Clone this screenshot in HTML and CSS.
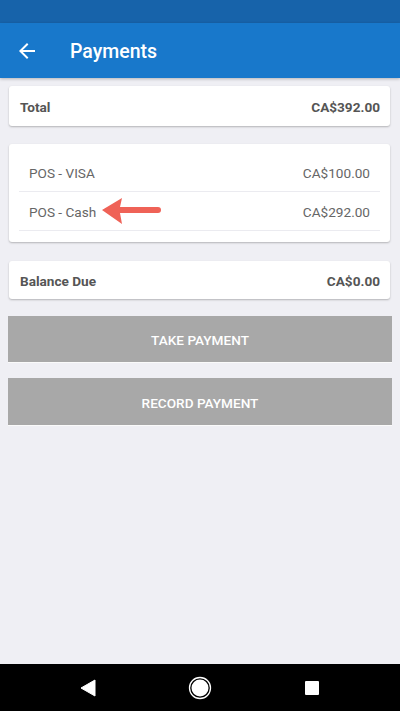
FILE: index.html
```html
<!DOCTYPE html>
<html>
<head>
<meta charset="utf-8">
<link rel="stylesheet" href="styles.css">
</head>
<body>
<div class="screen">
  <div class="status"></div>
  <div class="toolbar">
    <svg class="back" width="24" height="24" viewBox="0 0 24 24"><path d="M20 11H7.83l5.59-5.59L12 4l-8 8 8 8 1.41-1.41L7.83 13H20v-2z" fill="#fff"/></svg>
    <div class="title">Payments</div>
  </div>
  <div class="content">
    <div class="card summary">
      <span>Total</span><span>CA$392.00</span>
    </div>
    <div class="card list">
      <div class="row"><span>POS - VISA</span><span>CA$100.00</span></div>
      <div class="row cash"><span>POS - Cash</span><span>CA$292.00</span>
        <svg class="pointer" width="60" height="28" viewBox="0 0 60 28"><path d="M0 13 L20 1 L18 10 L56 10 A3 3 0 0 1 56 16 L18 16 L20 27 Z" fill="#ef6257"/></svg>
      </div>
    </div>
    <div class="card summary balance">
      <span>Balance Due</span><span>CA$0.00</span>
    </div>
    <div class="btn take">TAKE PAYMENT</div>
    <div class="btn record">RECORD PAYMENT</div>
  </div>
  <div class="navbar">
    <svg width="16" height="18" viewBox="0 0 16 18"><path d="M15 1 L15 17 L1 9 Z" fill="#fff" stroke="#fff" stroke-width="1" stroke-linejoin="round"/></svg>
    <svg width="24" height="24" viewBox="0 0 24 24"><circle cx="12" cy="12" r="10.5" fill="none" stroke="#fff" stroke-width="1.3"/><circle cx="12" cy="12" r="8.5" fill="#fff"/></svg>
    <svg width="16" height="16" viewBox="0 0 16 16"><rect x="1" y="1" width="14" height="14" rx="1" fill="#fff"/></svg>
  </div>
</div>
</body>
</html>
```

FILE: styles.css
```css
* { box-sizing: border-box; }
html, body { margin: 0; padding: 0; }
body {
  font-family: Roboto, "Liberation Sans", sans-serif;
  background: #efeff4;
}
.screen {
  width: 400px;
  height: 711px;
  display: flex;
  flex-direction: column;
  background: #efeff4;
  overflow: hidden;
}
.status {
  height: 23px;
  background: #1763aa;
  flex: none;
}
.toolbar {
  height: 55px;
  background: #1878cb;
  display: flex;
  align-items: center;
  flex: none;
  box-shadow: 0 1px 3px rgba(0,0,0,0.25);
  position: relative;
  z-index: 1;
}
.back { margin-left: 15px; margin-top: 1px; }
.title {
  margin-left: 31px;
  color: #fff;
  font-size: 19.5px;
  font-weight: 500;
  margin-top: 2px;
}
.content {
  flex: 1;
  display: flex;
  flex-direction: column;
  padding-top: 8px;
}
.card {
  background: #fff;
  margin: 0 10px 0 9px;
  border-radius: 3px;
  box-shadow: 0 1px 2px rgba(0,0,0,0.25);
}
.summary {
  height: 40px;
  display: flex;
  justify-content: space-between;
  align-items: center;
  padding: 2px 10px 0 11px;
  font-size: 13.6px;
  font-weight: 700;
  color: #555;
}
.list {
  margin-top: 18px;
  padding: 9px 10px 11px 10px;
}
.row {
  height: 39px;
  display: flex;
  justify-content: space-between;
  align-items: center;
  padding: 2px 10px 0 10px;
  border-bottom: 1px solid #ebebf0;
  font-size: 13.6px;
  color: #666;
  position: relative;
}
.pointer {
  position: absolute;
  left: 83px;
  top: 5px;
}
.balance {
  margin-top: 19px;
  height: 38px;
}
.btn {
  margin: 0 8px;
  height: 47px;
  background: #a8a8a8;
  color: #fff;
  font-size: 13.6px;
  font-weight: 500;
  display: flex;
  align-items: center;
  justify-content: center;
  padding-top: 2px;
  border-bottom: 1px solid #fafafa;
}
.take { margin-top: 17px; }
.record { margin-top: 15px; height: 48px; }
.navbar {
  height: 47px;
  flex: none;
  background: #000;
  display: flex;
  align-items: center;
  justify-content: space-between;
  padding: 0 80px 0 80px;
}
```
